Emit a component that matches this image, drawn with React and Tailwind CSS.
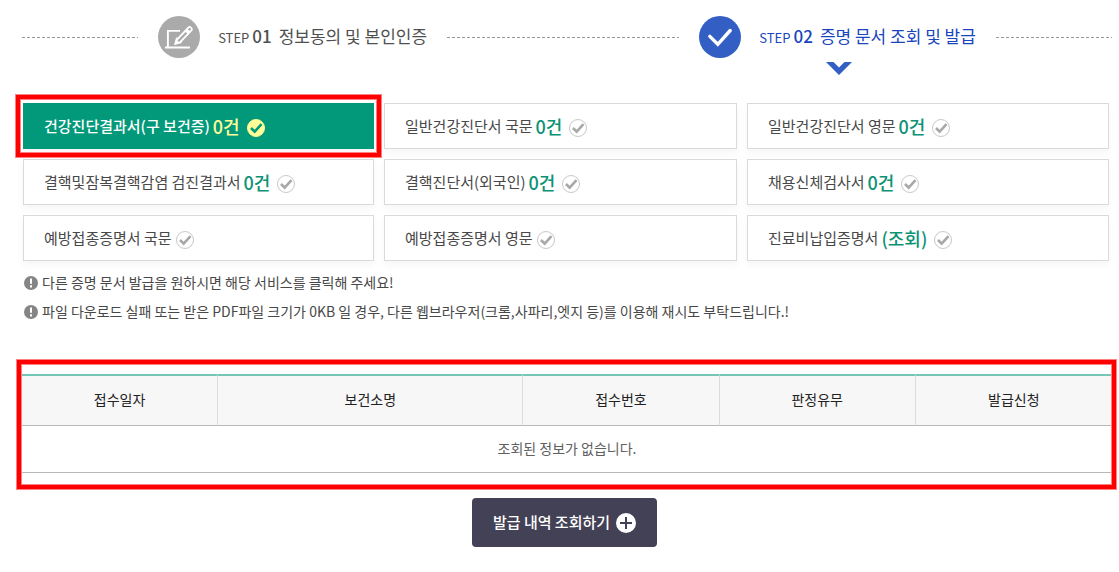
import React, { useState } from 'react';
import clsx from 'clsx';

const documents = [
  { id: 'health', name: '건강진단결과서(구 보건증)', count: '0건' },
  { id: 'general-ko', name: '일반건강진단서 국문', count: '0건' },
  { id: 'general-en', name: '일반건강진단서 영문', count: '0건' },
  { id: 'tb-latent', name: '결핵및잠복결핵감염 검진결과서', count: '0건' },
  { id: 'tb-foreigner', name: '결핵진단서(외국인)', count: '0건' },
  { id: 'employment', name: '채용신체검사서', count: '0건' },
  { id: 'vaccine-ko', name: '예방접종증명서 국문' },
  { id: 'vaccine-en', name: '예방접종증명서 영문' },
  { id: 'payment', name: '진료비납입증명서', count: '(조회)' },
];

const notices = [
  '다른 증명 문서 발급을 원하시면 해당 서비스를 클릭해 주세요!',
  '파일 다운로드 실패 또는 받은 PDF파일 크기가 0KB 일 경우, 다른 웹브라우저(크롬,사파리,엣지 등)를 이용해 재시도 부탁드립니다.!',
];

const columns = [
  { label: '접수일자', width: 'w-[18%]' },
  { label: '보건소명', width: 'w-[28%]' },
  { label: '접수번호', width: 'w-[18%]' },
  { label: '판정유무', width: 'w-[18%]' },
  { label: '발급신청', width: 'w-[18%]' },
];

const WriteIcon = () => (
  <svg viewBox="0 0 42 42" className="w-[42px] h-[42px] shrink-0" aria-hidden="true">
    <circle cx="21" cy="21" r="21" fill="#aaaaaa" />
    <path d="M22 14.9H9.9V31M7 31.5h25" fill="none" stroke="#fff" strokeWidth="1.9" />
    <path d="M21.2 24.2L31.6 13.3" fill="none" stroke="#fff" strokeWidth="6" strokeLinecap="round" />
    <path d="M16.6 28.6l1.9-6.8 4.9 4.7z" fill="#fff" stroke="#fff" strokeLinejoin="round" />
    <path d="M20.2 25.2L28.4 16.7" fill="none" stroke="#aaaaaa" strokeWidth="2.2" />
    <circle cx="31.6" cy="13.3" r="1.3" fill="#aaaaaa" />
  </svg>
);

const DoneIcon = () => (
  <svg viewBox="0 0 42 42" className="w-[42px] h-[42px] shrink-0" aria-hidden="true">
    <circle cx="21" cy="21" r="21" fill="#335fc4" />
    <path d="M10.8 20.4l8 7.9 12.4-13.8" fill="none" stroke="#fff" strokeWidth="3.4" strokeLinecap="round" />
  </svg>
);

const CheckIcon = ({ active }) => (
  <svg viewBox="0 0 18 18" className="w-[18px] h-[18px] shrink-0" aria-hidden="true">
    <circle
      cx="9"
      cy="9"
      r="8.5"
      fill={active ? '#ffff99' : '#fff'}
      stroke={active ? '#ffff99' : '#c8c8c8'}
    />
    <path
      d="M4 9l3.7 3.7 6.8-7.5"
      fill="none"
      stroke={active ? '#02997b' : '#a8a8a8'}
      strokeWidth="2.6"
    />
  </svg>
);

const NoticeIcon = () => (
  <svg viewBox="0 0 14 14" className="w-[14px] h-[14px] shrink-0" aria-hidden="true">
    <circle cx="7" cy="7" r="7" fill="#858585" />
    <path d="M7 2.5v5.3M7 9.3v2.2" stroke="#fff" strokeWidth="2" />
  </svg>
);

const Dashes = ({ className }) => (
  <svg className={clsx('h-px min-w-0', className)} aria-hidden="true">
    <line x1="0" y1="0.5" x2="100%" y2="0.5" stroke="#999999" strokeDasharray="3 2" />
  </svg>
);

const Step = ({ number, label, icon, current }) => (
  <li
    aria-current={current ? 'step' : undefined}
    className={clsx('relative flex items-center gap-[18px]', current ? 'text-[#1a45bd]' : 'text-[#505050]')}
  >
    {icon}
    <span className="flex items-baseline whitespace-nowrap text-[17px] leading-6">
      <span className="text-[13px]">STEP</span>
      <strong className="ml-[3px] font-medium">{number}</strong>
      <span className="ml-[7px]">{label}</span>
    </span>
    {current && (
      <svg
        viewBox="0 0 26 13"
        className="absolute top-full left-1/2 mt-1 -ml-3 w-[26px] h-[13px]"
        aria-hidden="true"
      >
        <path d="M0 0h7.5L13 5.5 18.5 0H26L13 13z" fill="#335fc4" />
      </svg>
    )}
  </li>
);

// Red frame that draws attention to a part of the page
const Highlight = ({ className }) => (
  <span
    className={clsx(
      'absolute pointer-events-none border-4 border-[#ff0000] shadow-[0_0_0_1px_#ff8080,inset_0_0_0_1px_#ff8080]',
      className
    )}
  />
);

const DocumentButton = ({ doc, active, onSelect }) => (
  <button
    type="button"
    aria-pressed={active}
    onClick={() => onSelect(doc.id)}
    className={clsx(
      'flex w-full h-[46px] items-center border px-5 whitespace-nowrap text-[15px] leading-6 shadow-[0_4px_8px_rgba(20,30,70,0.04)]',
      active
        ? 'border-[#02997b] bg-[#02997b] font-medium text-white'
        : 'border-[#dadadc] bg-white text-[#484848]'
    )}
  >
    <span>{doc.name}</span>
    {doc.count && (
      <strong
        className={clsx('mx-[3px] text-lg leading-6 font-medium', active ? 'text-[#ffff99]' : 'text-[#0c9276]')}
      >
        {doc.count}
      </strong>
    )}
    <span className="ml-1 mt-1">
      <CheckIcon active={active} />
    </span>
  </button>
);

const App = () => {
  const [selected, setSelected] = useState('health');

  return (
    <main className="bg-white pt-4 pb-6 pl-[22px] pr-[7px] font-['Noto_Sans_CJK_KR','Noto_Sans',sans-serif]">
      {/* Steps */}
      <ol className="flex items-center gap-5">
        <Dashes className="flex-1" />
        <Step number="01" label="정보동의 및 본인인증" icon={<WriteIcon />} />
        <Dashes className="flex-2" />
        <Step number="02" label="증명 문서 조회 및 발급" icon={<DoneIcon />} current />
        <Dashes className="flex-1" />
      </ol>

      {/* Document types */}
      <ul className="mt-[45px] ml-px mr-[3px] grid grid-cols-[351fr_353fr_362fr] gap-[10px]">
        {documents.map((doc) => (
          <li key={doc.id} className="relative">
            <DocumentButton doc={doc} active={selected === doc.id} onSelect={setSelected} />
            {doc.id === 'health' && <Highlight className="-inset-x-[7px] -inset-y-2" />}
          </li>
        ))}
      </ul>

      <ul className="mt-[7px] text-sm leading-[29px] text-[#484848]">
        {notices.map((notice) => (
          <li key={notice} className="flex items-center gap-1 pl-[2px]">
            <NoticeIcon />
            <span>{notice}</span>
          </li>
        ))}
      </ul>

      {/* Results */}
      <section className="relative mt-12">
        <table className="w-full table-fixed border-separate border-spacing-0 text-center text-sm">
          <thead>
            <tr className="h-[52px] bg-[#f7f7f7] text-[#222222]">
              {columns.map(({ label, width }) => (
                <th
                  key={label}
                  scope="col"
                  className={clsx(
                    'border-t-2 border-r border-b border-t-[#76c6b5] border-r-[#dcdcdc] border-b-[#b8b8b8] pb-[3px] font-normal last:border-r-0',
                    width
                  )}
                >
                  {label}
                </th>
              ))}
            </tr>
          </thead>
          <tbody>
            <tr className="h-[47px]">
              <td colSpan={5} className="border-b border-[#b8b8b8] pb-[3px] text-[#606060]">
                조회된 정보가 없습니다.
              </td>
            </tr>
          </tbody>
        </table>
        <Highlight className="-top-[14px] -bottom-4 -left-[5px] -right-1" />
      </section>

      <div className="mt-[25px] mr-[5px] flex justify-center">
        <button
          type="button"
          className="flex h-[49px] items-center gap-[6px] rounded bg-[#434156] px-[21px] text-[15px] font-medium text-white"
        >
          발급 내역 조회하기
          <svg viewBox="0 0 20 20" className="w-5 h-5" aria-hidden="true">
            <circle cx="10" cy="10" r="10" fill="#fff" />
            <path d="M10 4v12M4 10h12" stroke="#434156" strokeWidth="2" />
          </svg>
        </button>
      </div>
    </main>
  );
};

export default App;
